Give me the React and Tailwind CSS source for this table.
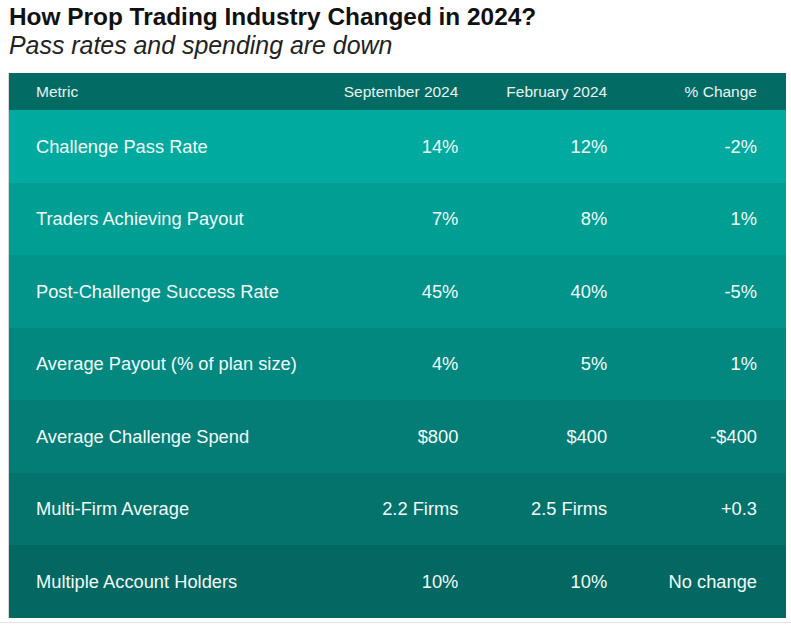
import React from "react";

const rows = [
  { metric: "Challenge Pass Rate", sep: "14%", feb: "12%", change: "-2%", bg: "bg-[#00aa9f]" },
  { metric: "Traders Achieving Payout", sep: "7%", feb: "8%", change: "1%", bg: "bg-[#019e94]" },
  { metric: "Post-Challenge Success Rate", sep: "45%", feb: "40%", change: "-5%", bg: "bg-[#02938a]" },
  { metric: "Average Payout (% of plan size)", sep: "4%", feb: "5%", change: "1%", bg: "bg-[#03887f]" },
  { metric: "Average Challenge Spend", sep: "$800", feb: "$400", change: "-$400", bg: "bg-[#037d76]" },
  { metric: "Multi-Firm Average", sep: "2.2 Firms", feb: "2.5 Firms", change: "+0.3", bg: "bg-[#03736c]" },
  { metric: "Multiple Account Holders", sep: "10%", feb: "10%", change: "No change", bg: "bg-[#036862]" },
];

export default function App() {
  return (
    <div className="w-[791px] h-[625px] bg-white font-['Liberation_Sans',Arial,sans-serif] overflow-hidden">
      <div className="pl-[9px] pt-[3px]">
        <h1 className="text-[24.4px] leading-[28px] font-bold text-[#111]">
          How Prop Trading Industry Changed in 2024?
        </h1>
        <p className="text-[24.9px] leading-[29px] italic text-[#222]">
          Pass rates and spending are down
        </p>
      </div>
      <div className="mt-[13px] ml-[8px] w-[778px] border-l border-[#d8d8d8]">
        <div className="flex h-[37px] items-center bg-[#016b64] text-[15.5px] text-[#e8f3f1]">
          <div className="w-[328px] pl-[27px]">Metric</div>
          <div className="w-[150px] pr-[28px] text-right">September 2024</div>
          <div className="w-[150px] pr-[29px] text-right">February 2024</div>
          <div className="w-[150px] pr-[29px] text-right">% Change</div>
        </div>
        {rows.map((r) => (
          <div
            key={r.metric}
            className={`flex h-[72.5px] items-center text-[18.3px] text-[#f2faf9] ${r.bg}`}
          >
            <div className="w-[328px] pl-[27px]">{r.metric}</div>
            <div className="w-[150px] pr-[28px] text-right">{r.sep}</div>
            <div className="w-[150px] pr-[29px] text-right">{r.feb}</div>
            <div className="w-[150px] pr-[29px] text-right">{r.change}</div>
          </div>
        ))}
      </div>
      <div className="mt-[4px] h-px w-full bg-[#e2e2e2]" />
    </div>
  );
}
